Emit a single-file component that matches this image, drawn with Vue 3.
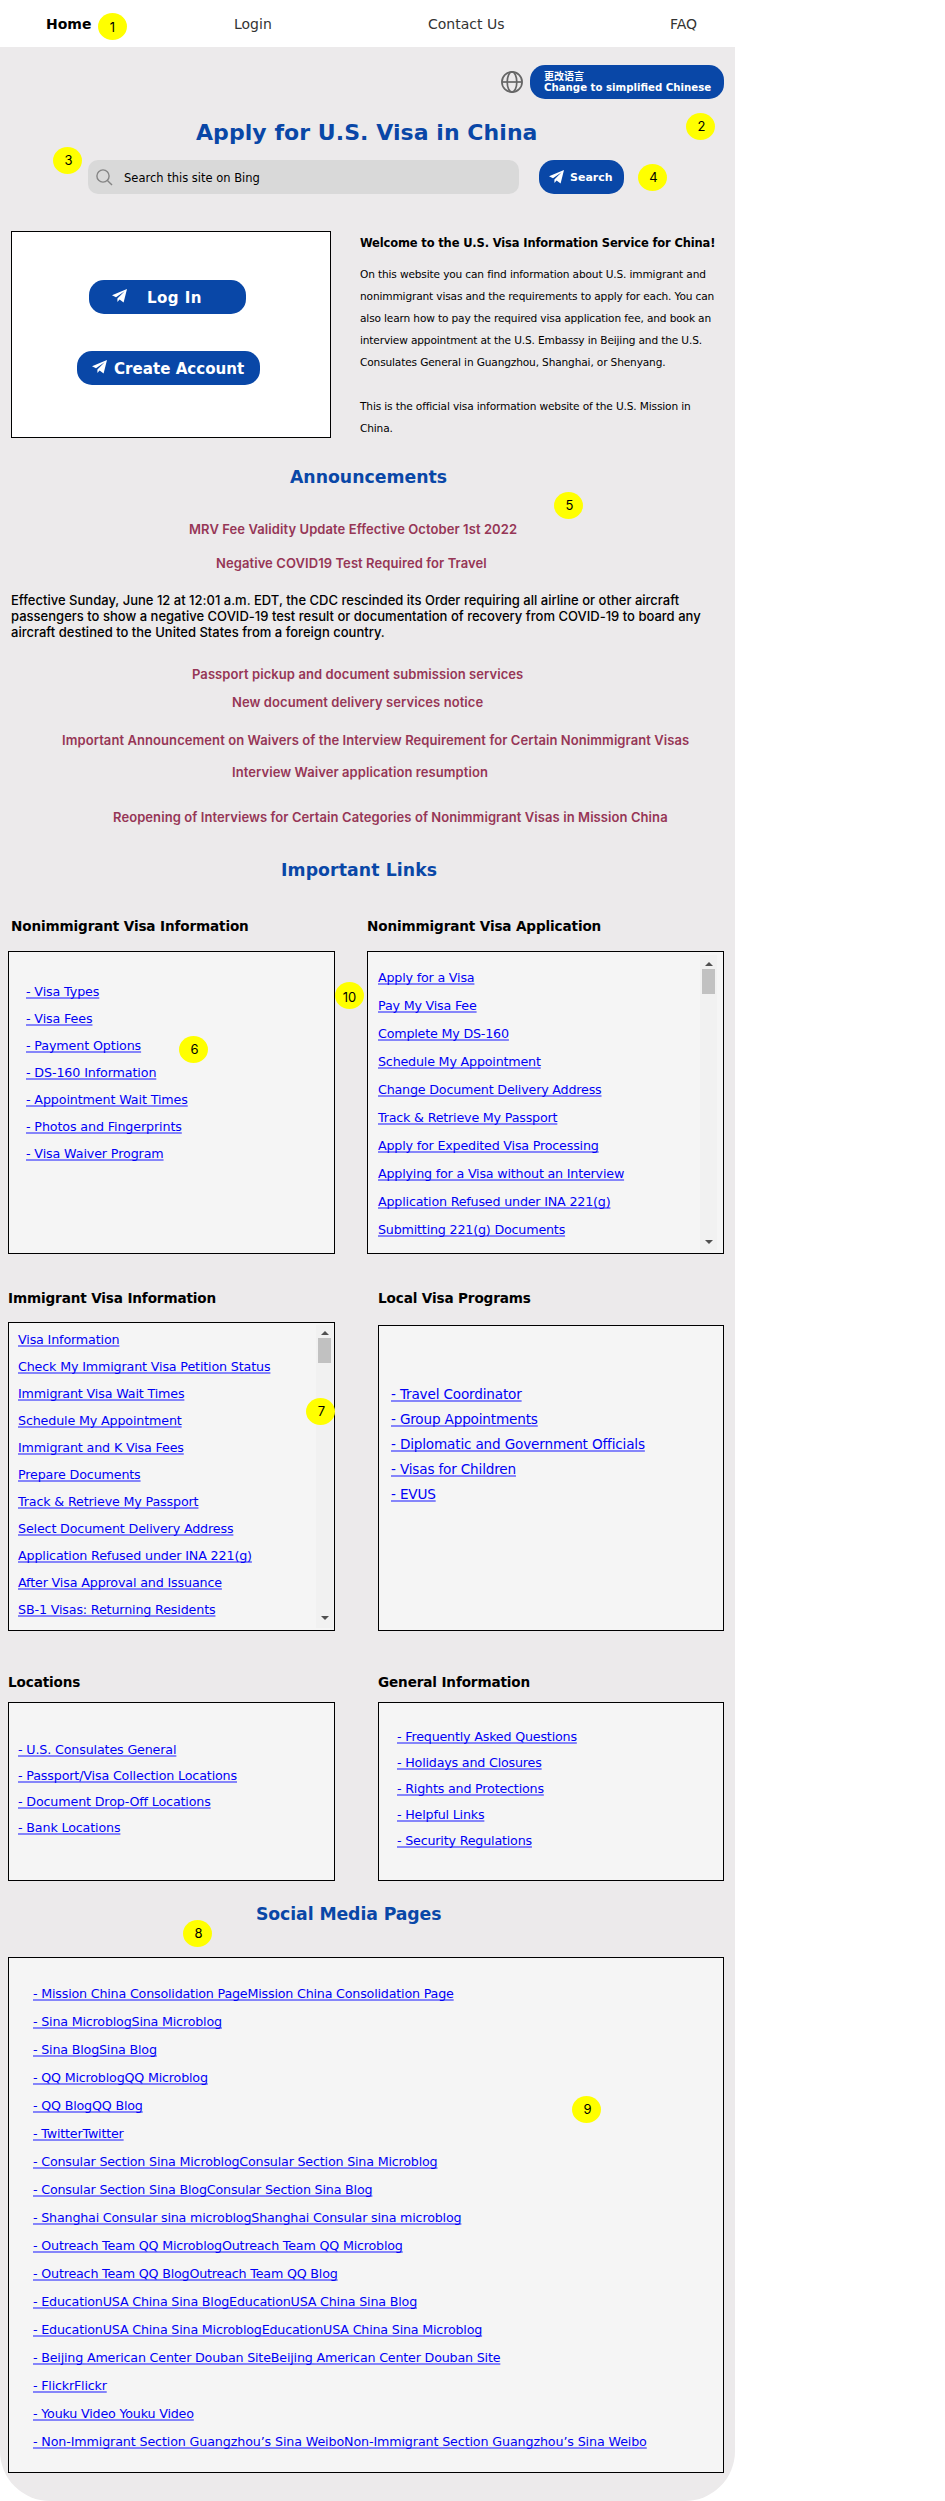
<script setup>
const nav = ['Home', 'Login', 'Contact Us', 'FAQ']

const intro = [
  'On this website you can find information about U.S. immigrant and',
  'nonimmigrant visas and the requirements to apply for each. You can',
  'also learn how to pay the required visa application fee, and book an',
  'interview appointment at the U.S. Embassy in Beijing and the U.S.',
  'Consulates General in Guangzhou, Shanghai, or Shenyang.'
]

const nonimmigrantInfo = [
  'Visa Types', 'Visa Fees', 'Payment Options', 'DS-160 Information',
  'Appointment Wait Times', 'Photos and Fingerprints', 'Visa Waiver Program'
]
const nonimmigrantApply = [
  'Apply for a Visa', 'Pay My Visa Fee', 'Complete My DS-160', 'Schedule My Appointment',
  'Change Document Delivery Address', 'Track & Retrieve My Passport',
  'Apply for Expedited Visa Processing', 'Applying for a Visa without an Interview',
  'Application Refused under INA 221(g)', 'Submitting 221(g) Documents'
]
const immigrantInfo = [
  'Visa Information', 'Check My Immigrant Visa Petition Status', 'Immigrant Visa Wait Times',
  'Schedule My Appointment', 'Immigrant and K Visa Fees', 'Prepare Documents',
  'Track & Retrieve My Passport', 'Select Document Delivery Address',
  'Application Refused under INA 221(g)', 'After Visa Approval and Issuance',
  'SB-1 Visas: Returning Residents'
]
const localPrograms = [
  'Travel Coordinator', 'Group Appointments', 'Diplomatic and Government Officials',
  'Visas for Children', 'EVUS'
]
const locations = [
  'U.S. Consulates General', 'Passport/Visa Collection Locations',
  'Document Drop-Off Locations', 'Bank Locations'
]
const general = [
  'Frequently Asked Questions', 'Holidays and Closures', 'Rights and Protections',
  'Helpful Links', 'Security Regulations'
]
const social = [
  'Mission China Consolidation PageMission China Consolidation Page',
  'Sina MicroblogSina Microblog',
  'Sina BlogSina Blog',
  'QQ MicroblogQQ Microblog',
  'QQ BlogQQ Blog',
  'TwitterTwitter',
  'Consular Section Sina MicroblogConsular Section Sina Microblog',
  'Consular Section Sina BlogConsular Section Sina Blog',
  'Shanghai Consular sina microblogShanghai Consular sina microblog',
  'Outreach Team QQ MicroblogOutreach Team QQ Microblog',
  'Outreach Team QQ BlogOutreach Team QQ Blog',
  'EducationUSA China Sina BlogEducationUSA China Sina Blog',
  'EducationUSA China Sina MicroblogEducationUSA China Sina Microblog',
  'Beijing American Center Douban SiteBeijing American Center Douban Site',
  'FlickrFlickr',
  'Youku Video Youku Video',
  'Non-Immigrant Section Guangzhou’s Sina WeiboNon-Immigrant Section Guangzhou’s Sina Weibo'
]

const plane = 'M0 6.2 15 0 11.6 13.4 7.6 10.6 5.4 13V9.4L12.6 2.2 4 8.2Z'
</script>

<template>
  <div class="page">
    <nav class="nav">
      <a v-for="(item, i) in nav" :key="item" :class="['nav-item', 'nav-' + i]">{{ item }}</a>
    </nav>

    <div class="language">
      <svg class="globe" viewBox="0 0 22 22" fill="none" stroke="#666" stroke-width="1.7">
        <circle cx="11" cy="11" r="10.1" />
        <ellipse cx="11" cy="11" rx="4.8" ry="10.1" />
        <path d="M1 11H21" />
      </svg>
      <button class="btn language-btn"><span class="zh">更改语言</span><span>Change to simplified Chinese</span></button>
    </div>

    <h1 class="title">Apply for U.S. Visa in China</h1>

    <div class="search">
      <div class="search-box">
        <svg class="lens" viewBox="0 0 17 17" fill="none" stroke="#858585" stroke-width="1.4">
          <circle cx="7" cy="7" r="6.1" />
          <path d="M11.4 11.4 16 16" />
        </svg>
        <span>Search this site on Bing</span>
      </div>
      <button class="btn search-btn">
        <svg class="plane" viewBox="0 0 15 13.5"><path :d="plane" fill="#fff" /></svg>
        <span>Search</span>
      </button>
    </div>

    <section class="welcome">
      <div class="account">
        <button class="btn account-btn login-btn">
          <svg class="plane" viewBox="0 0 15 13.5"><path :d="plane" fill="#fff" /></svg>
          <span>Log In</span>
        </button>
        <button class="btn account-btn create-btn">
          <svg class="plane" viewBox="0 0 15 13.5"><path :d="plane" fill="#fff" /></svg>
          <span>Create Account</span>
        </button>
      </div>
      <div class="intro">
        <h2>Welcome to the U.S. Visa Information Service for China!</h2>
        <p><span v-for="line in intro" :key="line">{{ line }}</span></p>
        <p><span>This is the official visa information website of the U.S. Mission in</span><span>China.</span></p>
      </div>
    </section>

    <h2 class="section-title t-announce">Announcements</h2>
    <div class="announcements">
      <a class="a1">MRV Fee Validity Update Effective October 1st 2022</a>
      <a class="a2">Negative COVID19 Test Required for Travel</a>
      <p>
        <span>Effective Sunday, June 12 at 12:01 a.m. EDT, the CDC rescinded its Order requiring all airline or other aircraft</span>
        <span>passengers to show a negative COVID-19 test result or documentation of recovery from COVID-19 to board any</span>
        <span>aircraft destined to the United States from a foreign country.</span>
      </p>
      <a class="a3">Passport pickup and document submission services</a>
      <a class="a4">New document delivery services notice</a>
      <a class="a5">Important Announcement on Waivers of the Interview Requirement for Certain Nonimmigrant Visas</a>
      <a class="a6">Interview Waiver application resumption</a>
      <a class="a7">Reopening of Interviews for Certain Categories of Nonimmigrant Visas in Mission China</a>
    </div>

    <h2 class="section-title t-links">Important Links</h2>

    <div class="row row1">
      <section>
        <h3 class="shift">Nonimmigrant Visa Information</h3>
        <div class="panel">
          <ul class="links l-info"><li v-for="l in nonimmigrantInfo" :key="l"><a>- {{ l }}</a></li></ul>
        </div>
      </section>
      <section>
        <h3>Nonimmigrant Visa Application</h3>
        <div class="panel">
          <ul class="links l-apply"><li v-for="l in nonimmigrantApply" :key="l"><a>{{ l }}</a></li></ul>
          <div class="scrollbar sb-apply"><i class="up"></i><i class="thumb"></i><i class="down"></i></div>
        </div>
      </section>
    </div>

    <div class="row row2">
      <section>
        <h3>Immigrant Visa Information</h3>
        <div class="panel">
          <ul class="links l-immigrant"><li v-for="l in immigrantInfo" :key="l"><a>{{ l }}</a></li></ul>
          <div class="scrollbar sb-immigrant"><i class="up"></i><i class="thumb"></i><i class="down"></i></div>
        </div>
      </section>
      <section>
        <h3>Local Visa Programs</h3>
        <div class="panel local">
          <ul class="links l-local"><li v-for="l in localPrograms" :key="l"><a>- {{ l }}</a></li></ul>
        </div>
      </section>
    </div>

    <div class="row row3">
      <section>
        <h3>Locations</h3>
        <div class="panel">
          <ul class="links l-locations"><li v-for="l in locations" :key="l"><a>- {{ l }}</a></li></ul>
        </div>
      </section>
      <section>
        <h3>General Information</h3>
        <div class="panel">
          <ul class="links l-general"><li v-for="l in general" :key="l"><a>- {{ l }}</a></li></ul>
        </div>
      </section>
    </div>

    <h2 class="section-title t-social">Social Media Pages</h2>
    <div class="panel social">
      <ul class="links l-social"><li v-for="l in social" :key="l"><a>- {{ l }}</a></li></ul>
    </div>

    <span class="badge b1">1</span>
    <span class="badge b2">2</span>
    <span class="badge b3">3</span>
    <span class="badge b4">4</span>
    <span class="badge b5">5</span>
    <span class="badge b6">6</span>
    <span class="badge b7">7</span>
    <span class="badge b8">8</span>
    <span class="badge b9">9</span>
    <span class="badge b10">10</span>
  </div>
</template>

<style>
body { background: #fff; }
</style>

<style scoped>
* { box-sizing: border-box; margin: 0; padding: 0; }

.page {
  position: relative;
  width: 735px;
  height: 2501px;
  background: #eceaeb;
  border-radius: 0 0 50px 50px;
  overflow: hidden;
  color: #000;
  font-family: "DejaVu Sans", sans-serif;
  white-space: nowrap;
}

.nav {
  display: grid;
  grid-template-columns: 188px 194px 242px 1fr;
  height: 47px;
  padding-left: 46px;
  background: #fff;
  font: 14px/20px "DejaVu Sans", sans-serif;
  color: #333;
}
.nav-item { padding-top: 14px; }
.nav-0 { font-weight: 700; color: #000; }

.btn {
  display: flex;
  align-items: center;
  height: 34px;
  border: 0;
  border-radius: 15px;
  background: #0947a7;
  color: #fff;
  font-family: "DejaVu Sans", "Noto Sans CJK SC", sans-serif;
  font-weight: 700;
  white-space: nowrap;
}
.plane { flex: none; width: 15px; height: 13.5px; }

.language { display: flex; align-items: center; margin: 18px 0 0 501px; }
.globe { width: 22px; height: 22px; margin: 0 7px 0 0; }
.language-btn {
  width: 194px;
  flex-direction: column;
  align-items: flex-start;
  padding: 5px 0 0 14px;
  font-size: 10.2px;
  line-height: 12px;
}
.zh { font: 700 10px/12px "Noto Sans CJK SC", sans-serif; }

.title {
  margin: 21px 0 0 196px;
  font: 700 22px/26px "DejaVu Sans", sans-serif;
  letter-spacing: 0.06px;
  color: #0947a7;
}

.search { display: flex; margin: 14px 0 0 88px; }
.search-box {
  display: flex;
  align-items: center;
  width: 431px;
  height: 34px;
  margin-right: 20px;
  padding-left: 8px;
  border-radius: 10px;
  background: #d9d9d9;
  font: 11.5px/16px "DejaVu Sans", sans-serif;
}
.search-box span { padding-top: 2px; }
.lens { width: 17px; height: 17px; margin-right: 11px; }
.search-btn { width: 85px; padding-left: 10px; font-size: 11px; }
.search-btn span { margin-left: 6px; }

.welcome { display: flex; height: 207px; margin: 37px 0 0 11px; }
.account {
  width: 320px;
  height: 207px;
  border: 1px solid #000;
  background: #fff;
}
.account-btn { font-size: 15.1px; line-height: 20px; }
.account-btn .plane { margin-top: -2px; }
.account-btn span { padding-top: 1px; }
.login-btn { width: 157px; margin: 48px 0 0 77px; padding-left: 23px; letter-spacing: 0.4px; }
.login-btn span { margin-left: 20px; }
.create-btn { width: 183px; margin: 37px 0 0 65px; padding-left: 15px; }
.create-btn span { margin-left: 7px; }

.intro { margin: 1px 0 0 29px; font: 10.6px/22px "DejaVu Sans", sans-serif; letter-spacing: -0.15px; }
.intro h2 {
  margin-bottom: 9px;
  font: 700 11.5px/22px "DejaVu Sans", sans-serif;
  letter-spacing: -0.15px;
}
.intro p + p { margin-top: 22px; }
.intro p span, .announcements p span { display: block; }

.section-title {
  font: 700 17.3px/24px "DejaVu Sans", sans-serif;
  color: #0947a7;
}
.t-announce { margin: 27px 0 0 290px; }
.t-links { margin: 33px 0 0 281px; letter-spacing: 0.1px; }
.t-social { margin: 21px 0 0 256px; letter-spacing: -0.1px; }

.announcements {
  display: flex;
  flex-direction: column;
  margin-top: 32px;
  font: 600 13px/16px Inter, sans-serif;
}
.announcements a { color: #963656; letter-spacing: 0.08px; }
.announcements p { margin: 21px 0 26px 11px; font-weight: 500; color: #000; letter-spacing: 0.01px; }
.a1 { margin-left: 189px; }
.a2 { margin: 18px 0 0 216px; }
.a3 { margin-left: 192px; }
.a4 { margin: 12px 0 0 232px; }
.a5 { margin: 22px 0 0 62px; }
.a6 { margin: 16px 0 0 232px; }
.a7 { margin: 29px 0 0 113px; }

.row { display: grid; margin-left: 8px; }
.row1 { grid-template-columns: 327px 357px; column-gap: 32px; margin-top: 34px; }
.row2 { grid-template-columns: 327px 346px; column-gap: 43px; margin-top: 34px; }
.row3 { grid-template-columns: 327px 346px; column-gap: 43px; margin-top: 41px; }
.row h3 { font: 700 13.6px/20px "DejaVu Sans", sans-serif; letter-spacing: -0.14px; }
.row .shift { padding-left: 3px; }
.panel { display: flex; justify-content: space-between; border: 1px solid #000; background: #f5f5f5; }
.row1 .panel { height: 303px; margin-top: 15px; }
.row2 .panel { height: 309px; margin-top: 14px; }
.row2 .local { height: 306px; margin-top: 17px; }
.row3 .panel { height: 179px; margin-top: 10px; }

.links { list-style: none; font: 12.7px/27px "DejaVu Sans", sans-serif; letter-spacing: -0.19px; }
.links a {
  color: #0000f5;
  text-decoration: underline;
  text-decoration-color: #8585fa;
  text-decoration-thickness: 2px;
  text-underline-offset: 1px;
  text-decoration-skip-ink: none;
}
.l-info { padding: 26px 0 0 17px; letter-spacing: -0.12px; }
.l-apply { padding: 12px 0 0 10px; line-height: 28px; }
.l-immigrant { padding: 3px 0 0 9px; letter-spacing: -0.15px; }
.l-local { padding: 56px 0 0 12px; font-size: 13.6px; line-height: 25px; letter-spacing: -0.17px; }
.l-locations { padding: 34px 0 0 9px; line-height: 26px; letter-spacing: -0.15px; }
.l-general { padding: 21px 0 0 18px; line-height: 26px; }

.scrollbar {
  display: flex;
  flex-direction: column;
  align-items: center;
  width: 17px;
  background: #f1f1f1;
}
.sb-apply { margin: 3px 6px 3px 0; padding: 7px 0 6px; }
.sb-immigrant { margin: 2px 1px 2px 0; padding: 6px 0 8px; }
.up, .down { border: 0 solid transparent; border-width: 0 4px; }
.up { border-bottom: 4px solid #505050; }
.down { border-top: 4px solid #505050; margin-top: auto; }
.thumb { width: 13px; height: 25px; margin-top: 3px; background: #c1c1c1; }

.social { width: 716px; height: 516px; margin: 31px 0 0 8px; }
.l-social { padding: 22px 0 0 24px; line-height: 28px; }
.l-social li:last-child { letter-spacing: -0.13px; }

/* Numbered callouts float over the page */
.badge {
  position: absolute;
  width: 29px;
  height: 27px;
  padding-left: 2px;
  border-radius: 50%;
  background: #ff0;
  font: 400 13px/26px Inter, sans-serif;
  text-align: center;
}
.b1 { left: 98px; top: 13px; padding-left: 0; line-height: 28px; }
.b2 { left: 686px; top: 113px; }
.b3 { left: 53px; top: 147px; }
.b4 { left: 638px; top: 164px; }
.b5 { left: 554px; top: 492px; }
.b6 { left: 179px; top: 1036px; }
.b7 { left: 306px; top: 1398px; }
.b8 { left: 183px; top: 1920px; }
.b9 { left: 572px; top: 2096px; }
.b10 { left: 335px; top: 982px; padding-left: 0; line-height: 30px; }
</style>
